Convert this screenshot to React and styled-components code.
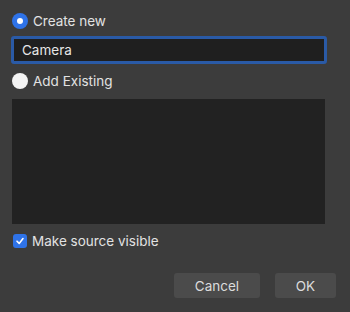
import styled, { createGlobalStyle } from 'styled-components';

const GlobalStyle = createGlobalStyle`
  html, body {
    margin: 0;
    padding: 0;
    background: #3c3c3c;
    font-family: Inter, "Liberation Sans", sans-serif;
  }
`;

const DialogStyles = styled.div`
  width: 350px;
  height: 312px;
  box-sizing: border-box;
  padding: 11px 14px 14px 12px;
  display: flex;
  flex-direction: column;
  color: #e2e2e2;
  font-size: 13.5px;
`;

const OptionRow = styled.label`
  display: flex;
  align-items: center;
  gap: 5px;
  height: 20px;
  margin-top: ${(p) => p.mt || 0}px;
`;

const Radio = styled.span`
  width: 16px;
  height: 16px;
  border-radius: 50%;
  box-sizing: border-box;
  background: ${(p) => (p.checked ? '#2f73e8' : '#f4f4f4')};
  display: flex;
  align-items: center;
  justify-content: center;
  &::after {
    content: '';
    width: 6px;
    height: 6px;
    border-radius: 50%;
    background: #fff;
    display: ${(p) => (p.checked ? 'block' : 'none')};
  }
`;

const NameInput = styled.div`
  margin: 5px 9px 0 -1px;
  height: 28px;
  box-sizing: border-box;
  border: 3px solid #2a5aa6;
  border-radius: 3px;
  background: #1f1f1f;
  display: flex;
  align-items: center;
  padding-left: 8px;
  color: #e6e6e6;
  font-size: 13.5px;
`;

const SourceList = styled.div`
  margin: 8px 11px 0 0;
  height: 125px;
  background: #222222;
`;

const CheckRow = styled.label`
  display: flex;
  align-items: center;
  gap: 5px;
  margin-top: 9px;
  padding-left: 1px;
`;

const Checkbox = styled.span`
  width: 14px;
  height: 14px;
  border-radius: 3px;
  background: #2f73e8;
  display: flex;
  align-items: center;
  justify-content: center;
`;

const Footer = styled.div`
  margin-top: auto;
  display: flex;
  justify-content: flex-end;
  gap: 15px;
`;

const ButtonStyles = styled.button`
  height: 25px;
  width: ${(p) => p.w}px;
  border: none;
  border-radius: 3px;
  background: #4b4b4b;
  color: #dcdcdc;
  font-family: inherit;
  font-size: 13.5px;
`;

export default function App() {
  return (
    <>
      <GlobalStyle />
      <DialogStyles>
        <OptionRow>
          <Radio checked />
          Create new
        </OptionRow>
        <NameInput>Camera</NameInput>
        <OptionRow mt={7}>
          <Radio />
          Add Existing
        </OptionRow>
        <SourceList />
        <CheckRow>
          <Checkbox>
            <svg width="10" height="10" viewBox="0 0 10 10">
              <path d="M2 5.2 L4.2 7.4 L8 2.6" fill="none" stroke="#fff" strokeWidth="1.6" strokeLinecap="round" strokeLinejoin="round" />
            </svg>
          </Checkbox>
          Make source visible
        </CheckRow>
        <Footer>
          <ButtonStyles w={86}>Cancel</ButtonStyles>
          <ButtonStyles w={61}>OK</ButtonStyles>
        </Footer>
      </DialogStyles>
    </>
  );
}
